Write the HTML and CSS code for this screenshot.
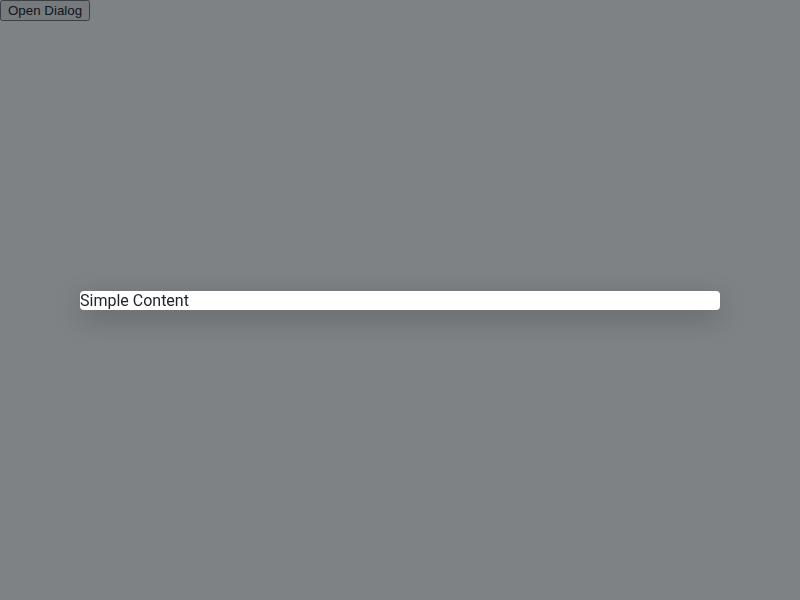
FILE: index.html
```html
<!DOCTYPE html>
<html>
<head>
<meta charset="utf-8">
<link rel="stylesheet" href="styles.css">
</head>
<body>
<button class="open-btn" type="button">Open Dialog</button>
<div class="backdrop">
  <div class="dialog">Simple Content</div>
</div>
</body>
</html>
```
FILE: styles.css
```css
html, body {
  margin: 0;
  padding: 0;
  background: #ffffff;
  font-family: Roboto, "Liberation Sans", sans-serif;
}
.open-btn {
  font-family: "Liberation Sans", Arial, sans-serif;
  font-size: 13.33px;
  color: #212529;
}
.backdrop {
  position: fixed;
  inset: 0;
  background: rgba(4, 10, 14, 0.51);
  display: flex;
  align-items: center;
  justify-content: center;
}
.dialog {
  width: 640px;
  background: #ffffff;
  border-radius: 4px;
  box-shadow: 0 8px 28px rgba(0, 0, 0, 0.22);
  color: #212529;
  font-size: 16px;
  line-height: 19px;
}
```
